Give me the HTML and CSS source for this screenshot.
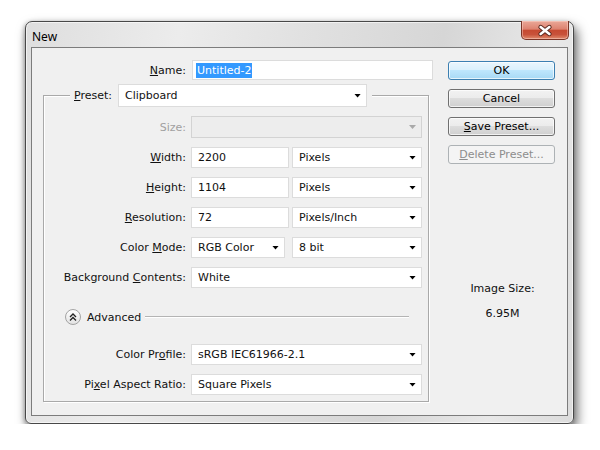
FILE: index.html
```html
<!DOCTYPE html>
<html>
  <head>
    <title>New</title>
    <link rel="stylesheet" href="styles.css">
  </head>
  <body>
    <div class="window">
      <div class="titlebar">
        <span class="title">New</span>
        <div class="close-btn">
          <svg width="47" height="19" viewBox="0 0 47 19">
            <path d="M19 6 L28 13 M28 6 L19 13" stroke="#5a2a20" stroke-width="4.6" stroke-linecap="round" fill="none"/>
            <path d="M19 6 L28 13 M28 6 L19 13" stroke="#fff" stroke-width="2.6" stroke-linecap="round" fill="none"/>
          </svg>
        </div>
      </div>

      <div class="client">
        <div class="form">
          <div class="name-row">
            <label class="name-label"><u>N</u>ame:</label>
            <div class="field name-field"><span class="selected">Untitled-2</span></div>
          </div>

          <fieldset class="group">
            <legend class="preset">
              <label><u>P</u>reset:</label>
              <div class="field select preset-select">Clipboard</div>
            </legend>

            <div class="row size-row disabled">
              <label>Size:</label>
              <div class="field select"></div>
            </div>
            <div class="row">
              <label><u>W</u>idth:</label>
              <div class="pair">
                <div class="field num">2200</div>
                <div class="field select unit">Pixels</div>
              </div>
            </div>
            <div class="row">
              <label><u>H</u>eight:</label>
              <div class="pair">
                <div class="field num">1104</div>
                <div class="field select unit">Pixels</div>
              </div>
            </div>
            <div class="row">
              <label><u>R</u>esolution:</label>
              <div class="pair">
                <div class="field num">72</div>
                <div class="field select unit">Pixels/Inch</div>
              </div>
            </div>
            <div class="row">
              <label>Color <u>M</u>ode:</label>
              <div class="pair">
                <div class="field select mode">RGB Color</div>
                <div class="field select unit">8 bit</div>
              </div>
            </div>
            <div class="row">
              <label>Background <u>C</u>ontents:</label>
              <div class="field select">White</div>
            </div>

            <div class="advanced">
              <svg class="adv-icon" width="16" height="16" viewBox="0 0 16 16">
                <defs>
                  <linearGradient id="advfill" x1="0" y1="0" x2="0" y2="1">
                    <stop offset="0" stop-color="#ffffff"/>
                    <stop offset="1" stop-color="#e2e2e2"/>
                  </linearGradient>
                </defs>
                <circle cx="8" cy="8" r="7.5" fill="url(#advfill)" stroke="#a3a3a3"/>
                <path d="M5 8 L8 5 L11 8 M5 11.5 L8 8.5 L11 11.5" stroke="#222" stroke-width="1.3" fill="none"/>
              </svg>
              <span class="adv-text">Advanced</span>
              <span class="adv-line"></span>
            </div>

            <div class="row profile-row">
              <label>Color Pr<u>o</u>file:</label>
              <div class="field select">sRGB IEC61966-2.1</div>
            </div>
            <div class="row">
              <label>Pi<u>x</u>el Aspect Ratio:</label>
              <div class="field select">Square Pixels</div>
            </div>
          </fieldset>
        </div>

        <div class="side">
          <button class="btn default">OK</button>
          <button class="btn">Cancel</button>
          <button class="btn"><u>S</u>ave Preset...</button>
          <button class="btn" disabled><u>D</u>elete Preset...</button>

          <div class="image-size">
            <div>Image Size:</div>
            <div class="size-value">6.95M</div>
          </div>
        </div>
      </div>
    </div>
  </body>
</html>
```

FILE: styles.css
```css
* {
  box-sizing: border-box;
}

body {
  margin: 0;
  background-color: #fff;
  font-family: "DejaVu Sans", sans-serif;
  font-size: 11px;
  color: #111;
}

.window {
  margin: 21px 0 0 25px;
  width: 549px;
  height: 403px;
  border: 1px solid #484848;
  border-radius: 7px 7px 6px 6px;
  background: linear-gradient(100deg, #dedede 0%, #ececec 25%, #e1e1e1 45%, #d6d6d6 68%, #e8e8e8 86%, #dcdcdc 100%);
  box-shadow: inset 0 0 0 1px rgba(255, 255, 255, 0.6), 3px 6px 12px rgba(0, 0, 0, 0.6), -1px 1px 4px rgba(0, 0, 0, 0.25);
  display: flex;
  flex-direction: column;
}

.titlebar {
  height: 25px;
  display: flex;
  justify-content: space-between;
  align-items: flex-start;
  padding: 0 4px 0 6px;
}

.title {
  font-family: "Noto Sans", sans-serif;
  font-size: 12px;
  line-height: 16px;
  padding-top: 7px;
  color: #000;
}

.close-btn {
  margin-top: -1px;
  width: 48px;
  height: 19px;
  border: 1px solid #7a3527;
  border-top: none;
  border-radius: 0 0 5px 5px;
  background: linear-gradient(#eaa898 0%, #dd8270 45%, #c64a31 52%, #c8523a 75%, #e08b6d 100%);
  box-shadow: inset 0 0 0 1px rgba(255, 220, 210, 0.45);
  display: flex;
}

.close-btn svg {
  display: block;
}

.client {
  margin: 0 5px;
  height: 369px;
  border: 1px solid #7c7c7c;
  background-color: #f0f0f0;
  display: flex;
}

.form {
  width: 401px;
  padding-top: 12px;
}

.name-row {
  display: flex;
  align-items: center;
}

.name-label {
  width: 154px;
  text-align: right;
  margin-right: 6px;
}

.field {
  height: 21px;
  background-color: #fff;
  border: 1px solid #dcdcdc;
  display: flex;
  align-items: center;
  padding: 0 5px 0 6px;
  white-space: nowrap;
}

.name-field {
  width: 241px;
  height: 20px;
  padding-left: 3px;
}

.selected {
  background-color: #3399ff;
  color: #fff;
  padding: 1px 1px;
}

.select::after {
  content: "";
  margin-left: auto;
  width: 7px;
  height: 4px;
  background-color: #000;
  clip-path: polygon(0 0, 100% 0, 50% 100%);
}

.group {
  margin: 4px 0 0 11px;
  width: 386px;
  padding: 9px 5px 6px 0;
  border: 1px solid #a9a9a9;
  box-shadow: inset 1px 1px 0 #fff, 1px 1px 0 #fff;
}

.preset {
  margin-left: 26px;
  padding: 0 5px 0 4px;
  display: flex;
  align-items: center;
  background-color: #f0f0f0;
}

.preset label {
  margin-right: 6px;
}

.preset-select {
  width: 249px;
  height: 23px;
}

.row {
  display: grid;
  grid-template-columns: 142px 231px;
  column-gap: 5px;
  align-items: center;
  margin-bottom: 9px;
}

.row label {
  text-align: right;
  white-space: nowrap;
}

.size-row .field {
  height: 22px;
}

.disabled label {
  color: #a0a0a0;
}

.disabled .field {
  background-color: #ededed;
  border-color: #d3d3d3;
}

.disabled .select::after {
  background-color: #a9a9a9;
}

.pair {
  display: flex;
  justify-content: space-between;
}

.num {
  width: 98px;
}

.mode {
  width: 94px;
}

.unit {
  width: 130px;
}

.advanced {
  display: flex;
  align-items: center;
  margin: 21px 14px 19px 21px;
  height: 16px;
}

.adv-icon {
  display: block;
}

.adv-text {
  margin-left: 6px;
}

.adv-line {
  flex: 1;
  margin-left: 4px;
  border-top: 1px solid #b4b4b4;
  border-bottom: 1px solid #fff;
}

.row:last-child {
  margin-bottom: 0;
}

.side {
  margin-left: auto;
  margin-right: 12px;
  width: 107px;
  padding-top: 13px;
  display: flex;
  flex-direction: column;
}

.btn {
  height: 19px;
  margin-bottom: 9px;
  padding: 0;
  font-family: inherit;
  font-size: 11px;
  color: #000;
  border: 1px solid #707070;
  border-radius: 3px;
  background: linear-gradient(#f2f2f2 0%, #ebebeb 50%, #dddddd 50%, #cfcfcf 100%);
  box-shadow: inset 0 0 0 1px rgba(255, 255, 255, 0.7);
}

.btn.default {
  border-color: #3c7fb1;
  background: linear-gradient(#eaf6fd 0%, #d9f0fc 50%, #bee6fd 50%, #a7d9f5 100%);
}

.btn:disabled {
  color: #8d8d8d;
  border-color: #adb2b5;
  background: #f4f4f4;
  box-shadow: none;
}

.image-size {
  margin-top: 109px;
  text-align: center;
  line-height: 13px;
  padding-left: 2px;
}

.size-value {
  margin-top: 12px;
}
```
